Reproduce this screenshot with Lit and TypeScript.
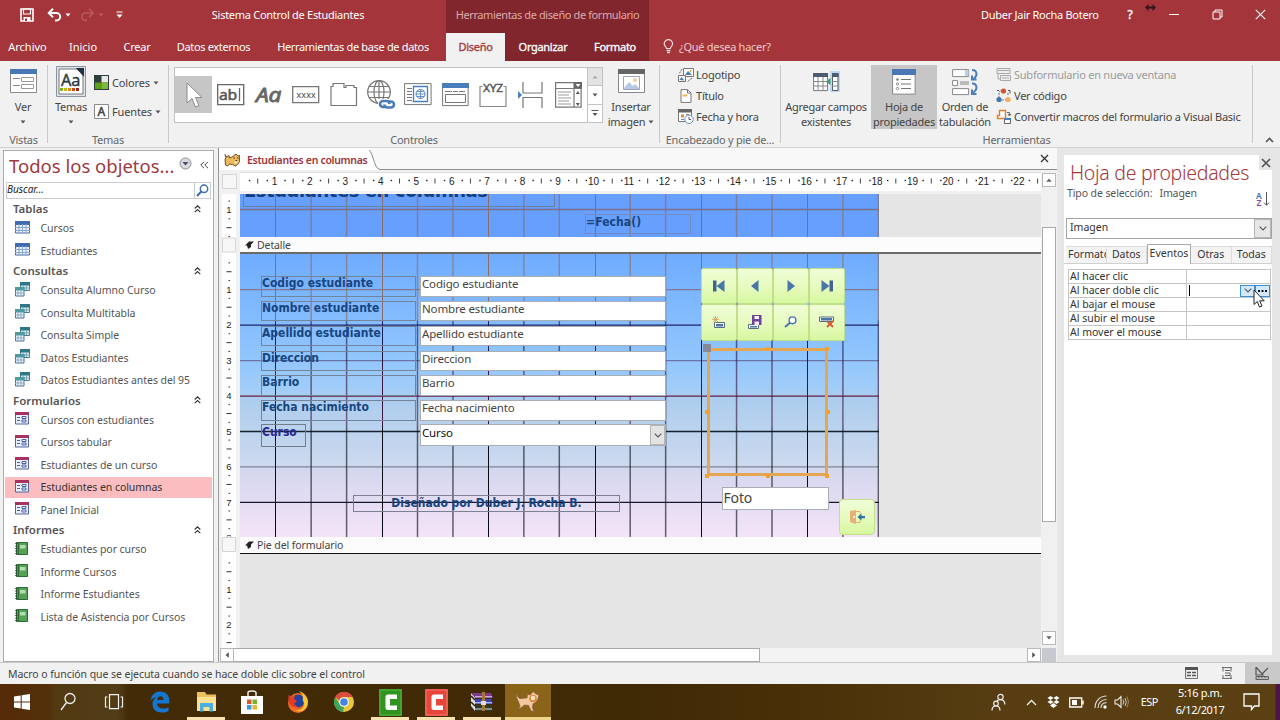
import { LitElement, html, svg, css, TemplateResult } from 'lit';
import { customElement, property, state } from 'lit/decorators.js';
import { classMap } from 'lit/directives/class-map.js';
import { styleMap } from 'lit/directives/style-map.js';

type Kind = 'table' | 'query' | 'form' | 'report';

interface Box {
  x: number;
  y: number;
  w: number;
  h: number;
  text?: string;
}

// pixels per centimetre on the design surface
const CM = 35.45;

const place = (b: Box) =>
  styleMap({ left: `${b.x}px`, top: `${b.y}px`, width: `${b.w}px`, height: `${b.h}px` });

const icon = (w: number, h: number, body: unknown) =>
  html`<svg width=${w} height=${h} viewBox="0 0 ${w} ${h}" fill="none">${body}</svg>`;

const caret = (color = '#555') => icon(6, 4, svg`<path d="M0.5 0.5h5L3 3.5z" fill=${color} />`);

const ICONS: Record<string, TemplateResult> = {
  save: icon(14, 14, svg`<path d="M1 1h12v12H1z" stroke="#fff" stroke-width="1.6"/><path d="M3.5 1h7v5h-7z" stroke="#fff" stroke-width="1.2"/><path d="M3.5 9h7v4h-7z" fill="#fff"/><path d="M5 10.5h2V13H5z" fill="#a4353a"/>`),
  undo: icon(15, 14, svg`<path d="M2 5h7.5a3.7 3.7 0 0 1 0 7.4H8" stroke="#fff" stroke-width="2"/><path d="M6 .8 1.8 5 6 9.2" stroke="#fff" stroke-width="2"/>`),
  redo: icon(15, 14, svg`<path d="M13 5H5.500a3.700 3.700 0 0 0 0 7.400H7" stroke="#b95a5e" stroke-width="1.6"/><path d="M9 .8 13.200 5 9 9.200" stroke="#b95a5e" stroke-width="1.6"/>`),
  customize: icon(7, 8, svg`<path d="M.5 1h6" stroke="#fff"/><path d="M.5 3.500h6L3.500 7z" fill="#fff"/>`),
  resize: icon(11, 7, svg`<path d="M0 3.500 3.500 0v2.500h4V0L11 3.500 7.500 7V4.500h-4V7z" fill="#33161a"/>`),
  min: icon(10, 10, svg`<path d="M0 5.500h10" stroke="#fff"/>`),
  restore: icon(11, 11, svg`<path d="M1 3h7v7H1z" stroke="#fff"/><path d="M3 3V1h7v7H8" stroke="#fff"/>`),
  close: icon(11, 11, svg`<path d="M.8.8l9.400 9.400M10.200.8.8 10.200" stroke="#fff" stroke-width="1.100"/>`),
  bulb: icon(11, 15, svg`<path d="M3.500 9.500C3.300 7.800 1.200 7.200 1.200 4.800a4.200 4.200 0 0 1 8.400 0c0 2.400-2.100 3-2.300 4.700z" stroke="#f3dcdc" stroke-width="1.200"/><path d="M3.600 11.500h3.800M4 13.500h3" stroke="#f3dcdc" stroke-width="1.300"/>`),

  view: icon(27, 25, svg`<path d="M.5.5h26v23H.5z" fill="#fff" stroke="#8a8a8a"/><path d="M0 0h27v5H0z" fill="#4a78b5"/><path d="M3 9.500h7M3 16.500h7" stroke="#8a8a8a"/><path d="M11.500 8.500h12v4h-12zM11.500 15.500h12v4h-12z" stroke="#9a9a9a"/>`),
  themes: icon(30, 31, svg`<path d="M.5.5h29v30H.5z" fill="#dfe3ec" stroke="#8b93a5"/><path d="M3 3h18l6 6v19H3z" fill="#fff" stroke="#777"/><path d="M20 2h8v9z" fill="#203040"/><text x="5" y="20" font-size="16" font-family="Noto Sans, sans-serif" fill="#2b3b44" stroke="#2b3b44" stroke-width=".4" textLength="19" lengthAdjust="spacingAndGlyphs">Aa</text><path d="M4 22h3v3H4z" fill="#7ab51d"/><path d="M8 22h3v3H8z" fill="#c9b71d"/><path d="M12 22h3v3h-3z" fill="#e08a1d"/><path d="M16 22h3v3h-3z" fill="#d0491d"/><path d="M20 22h3v3h-3z" fill="#8f2a1d"/>`),
  colors: icon(15, 15, svg`<path d="M0 0h15v15H0z" fill="#2e3d3d"/><path d="M7.500 1H14v6.500H7.500z" fill="#e7e9e4"/><path d="M1 7.500h6.500V14H1z" fill="#5f9e1d"/><path d="M7.500 7.500H14V14H7.500z" fill="#7dbb3b"/>`),
  fonts: icon(15, 15, svg`<path d="M.5.5h14v14H.5z" fill="#fff" stroke="#8a8a8a"/><text x="3.500" y="11.800" font-size="12" font-family="Noto Sans, sans-serif" fill="#444" stroke="#444" stroke-width=".5">A</text>`),
  pointer: icon(18, 28, svg`<path d="M2 2v20l5-4.500 3.500 8.500 3.500-1.500-3.500-8H17z" fill="#fff" stroke="#8a8a8a"/>`),
  textbox: icon(28, 22, svg`<path d="M.7.7h26v20H.7z" fill="#fff" stroke="#666" stroke-width="1.300"/><text x="2" y="15.500" font-size="15" font-family="Noto Sans, sans-serif" fill="#555" stroke="#555" stroke-width=".5" textLength="18" lengthAdjust="spacingAndGlyphs">ab</text><path d="M22.500 4v13" stroke="#666" stroke-width="1.300"/>`),
  label: icon(30, 30, svg`<text x="2" y="22" font-size="20" font-style="italic" font-family="Noto Sans, sans-serif" fill="#666" stroke="#666" stroke-width=".8" textLength="25" lengthAdjust="spacingAndGlyphs">Aa</text>`),
  button: icon(28, 18, svg`<path d="M.7.7h26v16H.7z" fill="#fff" stroke="#777" stroke-width="1.300"/><text x="4.500" y="12" font-size="9" font-family="Noto Sans, sans-serif" fill="#444" textLength="19">xxxx</text>`),
  tabctl: icon(28, 25, svg`<path d="M1 23.500V4.500H3V1.500h11v4h2V3.500h8v2h2.500v18z" fill="#fff" stroke="#777" stroke-width="1.200"/>`),
  link: icon(30, 30, svg`<g stroke="#777" stroke-width="1.200"><circle cx="13" cy="12" r="11.300"/><ellipse cx="13" cy="12" rx="5" ry="11.300"/><path d="M13 .7v22M2 12h22M3.500 6.500h19M3.500 17.500h19"/></g><path d="M12 19h18v11H12z" fill="#fff"/><g stroke="#4a7ebb" stroke-width="2.600"><path d="M20 27h-3a3 3 0 0 1 0-6h3.500a3 3 0 0 1 3 3"/><path d="M22 21.500h3a3 3 0 0 1 0 6h-3.500a3 3 0 0 1-3-3"/></g>`),
  navctl: icon(28, 23, svg`<path d="M.6.6h26.500v21H.6z" fill="#fff" stroke="#777"/><path d="M3 5.500h5M3 8.500h5M3 11.500h5M3 14.500h5M3 17.500h5" stroke="#777"/><path d="M9.500 3.500h14v15h-14z" fill="#fff" stroke="#4a7ebb" stroke-width="1.300"/><circle cx="16.500" cy="11" r="4.500" stroke="#4a7ebb"/><path d="M12 11h9M16.500 6.500v9M13 8.500h7M13 13.500h7" stroke="#4a7ebb" stroke-width=".8"/>`),
  subform: icon(27, 24, svg`<path d="M.6.6h25.500v22H.6z" fill="#fff" stroke="#777"/><path d="M0 0h27v5H0z" fill="#4a7ebb"/><path d="M3 8.500h7M11 8.500h5M17 8.500h6" stroke="#777"/><path d="M3.500 11.500h20v8h-20z" stroke="#777"/>`),
  group: icon(28, 27, svg`<path d="M3.500 5.500H1v20h26v-20h-2.500" stroke="#888" stroke-width="1.200"/><text x="4" y="11" font-size="11.500" font-family="Noto Sans, sans-serif" fill="#555" stroke="#555" stroke-width=".4" textLength="20" lengthAdjust="spacingAndGlyphs">XYZ</text>`),
  pagebreak: icon(26, 26, svg`<path d="M0 9l4 4-4 4z" fill="#4a7ebb"/><path d="M5 0v11h19V0M5 26V15.500h19V26" stroke="#777" stroke-width="1.200"/>`),
  combo: icon(27, 26, svg`<path d="M.6.6h25.500v24.500H.6z" fill="#fff" stroke="#777" stroke-width="1.200"/><path d="M0 6.500h27M19 .5V25" stroke="#777" stroke-width="1.200"/><path d="M19 0h8v6h-8z" fill="#666"/><path d="M20.500 2h5L23 5z" fill="#fff"/><path d="M3 10h13M3 13h11M3 16h13M3 19h11M3 22h13" stroke="#999"/><path d="M20.800 12h4L22.800 9zM20.800 21h4l-2 3z" fill="#555"/>`),
  insertimg: icon(27, 25, svg`<path d="M.5.5h26v23H.5z" fill="#fff" stroke="#888"/><path d="M0 0h27v5H0z" fill="#666"/><path d="M5.500 7.500h16v13h-16z" fill="#fff" stroke="#9aa6b5"/><path d="M6 19l5-6 4 4 2-2 4 4v1H6z" fill="#b8c9e4"/><circle cx="17" cy="11" r="2" fill="#f0cf93"/>`),
  logo: icon(16, 16, svg`<path d="M5.500 1.500h10v8h-10z" fill="#fff" stroke="#777"/><path d="M7 8l3-4 4 4z" fill="#4a7ebb"/><circle cx="12.500" cy="4" r="1" fill="#e8a33d"/><path d="M.5 8.500h7v6h-7z" fill="#fff" stroke="#777"/><path d="M1.500 13l2-3 3 3.500z" fill="#4a7ebb"/><path d="M4 2 1 7M14 11l-5 4" stroke="#666" stroke-dasharray="2 1"/>`),
  heading: icon(12, 14, svg`<path d="M1 .6h6.500L11 4v9.400H1z" fill="#fff" stroke="#777"/><path d="M7.500.6V4H11" stroke="#777"/><path d="M2.500 5.500h5v2h-5z" fill="#f0b455"/>`),
  date: icon(16, 15, svg`<path d="M.5 1.500h13v11H.5z" fill="#fff" stroke="#777"/><path d="M0 0h14v3.500H0z" fill="#666"/><path d="M3 5.500h3v3H3z" fill="#e08a3d"/><path d="M8 5.500h3M8 8h2M3 10.500h3" stroke="#888"/><circle cx="11" cy="10.300" r="4.200" fill="#fff" stroke="#5f8cc4"/><path d="M11 8v2.500h2" stroke="#555"/>`),
  addfields: icon(27, 22, svg`<path d="M.6 2.600h14v17H.6z" fill="#fff" stroke="#777"/><path d="M0 2h15v4H0z" fill="#4d5b73"/><path d="M0 10.500h15M0 15h15M5 6v14M10 6v14" stroke="#888"/><path d="M17 0h10v21H17z" fill="#c3d6ec"/><path d="M19.500 2.500h5.500v17h-5.500z" fill="#fff" stroke="#4d5b73"/><path d="M19 2h6.500v4H19z" fill="#4d5b73"/><path d="M19 10.500h6M19 15h6" stroke="#888"/><path d="M17.500 7v7L13 10.500z" fill="#3f9c74"/>`),
  sheet: icon(24, 26, svg`<path d="M.6.6h22.500v24.500H.6z" fill="#fff" stroke="#888"/><path d="M0 0h24v6H0z" fill="#4a78b5"/><path d="M9 10.500h10M9 15h10M9 19.500h10" stroke="#777"/><circle cx="5.500" cy="10.500" r="1.200" fill="#777"/><circle cx="5.500" cy="15" r="1.200" stroke="#777" stroke-width=".8"/><circle cx="5.500" cy="19.500" r="1.200" stroke="#777" stroke-width=".8"/>`),
  taborder: icon(27, 28, svg`<g stroke="#888" fill="#fff"><path d="M.6 1.600h16v7H.6zM.6 12.600h5v5h-5zM.6 20.600h16v6H.6z"/></g><path d="M13 2h3.500v6H13z" fill="#b9d0ec"/><path d="M8 13h9v4H8z" fill="#bbb"/><g stroke="#4a7ebb" stroke-width="2"><path d="M20 2c5.500 0 6 6 1 9M24.500 11.500H20V7.500M20 15.500c5.500 0 6 6 1 9M24.500 26H20v-4.500"/></g>`),
  newsub: icon(15, 15, svg`<g stroke="#aaa"><path d="M1 1.500h13v5H1zM4.500 8.500h10v5h-10z" fill="#eee"/><path d="M2 7v5h3M2 3.500h11M6 11h7" /></g>`),
  code: icon(15, 15, svg`<path d="M3 4l3-2M3 5v5M12 5v3M6 12h4" stroke="#777" stroke-dasharray="2 1"/><circle cx="7.500" cy="3" r="2.600" fill="#d9532c"/><circle cx="3" cy="11.500" r="2.600" fill="#3f73b5"/><circle cx="12" cy="11.500" r="2.600" fill="#f0ae62"/><path d="M1 2.500h2M12 2.500h2v3" stroke="#555"/>`),
  convert: icon(16, 16, svg`<path d="M3.500 1.500h6v8H1.500v-3h2z" fill="#fff" stroke="#e07b2d" stroke-width="1.400"/><path d="M11 3.500h2.500V6M12 5l1.500 2L15 5" stroke="#666"/><path d="M8.500 9.500h6v5h-6z" fill="#fff" stroke="#666"/><path d="M8 9h7v2H8z" fill="#4a7ebb"/>`),

  table: icon(15, 13, svg`<path d="M.5.5h14v11.500H.5z" fill="#eaf2fd" stroke="#4d6a99"/><path d="M0 0h15v4H0z" fill="#3f6cb0"/><path d="M0 6.500h15M0 9.500h15M4 3v9.500M7.500 3v9.500M11 3v9.500" stroke="#8aa5cf"/>`),
  query: icon(15, 15, svg`<path d="M5.500.5h9v8h-9z" fill="#d7e9f3" stroke="#4b7b8e"/><path d="M5 0h10v3.500H5z" fill="#2c7884"/><path d="M8 3v5M11.500 3v5M5.500 6h9" stroke="#7fa6b8"/><path d="M.5 5.500h8.500v8.500H.5z" fill="#eef6fb" stroke="#4b6f92"/><path d="M0 5h9.500v3.500H0z" fill="#4f9a9c"/><path d="M0 11h9M3 8v6M6 8v6" stroke="#8aa9c8"/>`),
  form: icon(14, 13, svg`<path d="M.5.5h13v11.500H.5z" fill="#e9effb" stroke="#53659b"/><path d="M0 0h14v3H0z" fill="#a8325f"/><path d="M2 5.500h3M2 8.500h3" stroke="#4a5ea5"/><path d="M7 4.500h4v2H7zM7 8h4v2H7z" fill="#fff" stroke="#4a5ea5"/>`),
  report: icon(13, 13, svg`<path d="M1.500.5h11v12h-11z" fill="#55a155" stroke="#2d6b35"/><path d="M5 3h5.500v3.500H5z" fill="#b5ddb0"/><path d="M3.500 1v11" stroke="#2d6b35"/><path d="M.3 1.500h2M.3 4h2M.3 6.500h2M.3 9h2M.3 11.500h2" stroke="#333"/>`),
  search: icon(13, 13, svg`<circle cx="8" cy="4.800" r="3.700" stroke="#3f6cb0" stroke-width="1.500"/><path d="M5.300 7.500 1 12" stroke="#3f6cb0" stroke-width="2"/>`),
  dropCircle: icon(13, 13, svg`<circle cx="6.500" cy="6.500" r="5.500" fill="#d9d9de" stroke="#8d8d96"/><path d="M3.500 5h6l-3 3.500z" fill="#444c70"/>`),
  chevrons: icon(9, 8, svg`<path d="M4 .8.8 4 4 7.200M8 .8 4.800 4 8 7.200" stroke="#444"/>`),
  collapse: icon(7, 8, svg`<path d="M.7 3.500 3.500.8l2.800 2.700M.7 7.200l2.800-2.700 2.800 2.700" stroke="#333" stroke-width="1.100"/>`),
  cat: icon(16, 14, svg`<path d="M1 1.500 2 5l-1 1 .5 6 2 1 2-2 3 .5 3 1.500 2-1.500 2-3V5l.5-2.500-2 .5-2-2-2 1.500L8 4 5.500 5 5 2.500 2.500 4z" fill="#ecb95f" stroke="#6b3d1a" stroke-width=".9"/><path d="M9.500 5h1.500M13 5h1.500M11.500 7.500h1.500" stroke="#5b2d10"/><path d="M10 8.500h4l-1 2h-2z" fill="#fbe9cf"/>`),
  bigcat: icon(24, 24, svg`<path d="M1 3.500Q1.500 8 4 8.500q3-.5 7-.5l.5-4L14 5l3-3.500L20 4l3 1-1 4-2 3-3 2-.5 4 1.500 3.500-3-.5-2.500-5.500-4-.5L6 17l-3.500 2.500L4 16l-1.500-4Q-.5 8 1 3.500z" fill="#f0c9a0" stroke="#8c5a3c" stroke-width=".8"/><circle cx="17" cy="8.500" r="3.800" fill="#e08b3a"/><circle cx="17" cy="8" r="2.200" fill="#fbe6c8"/>`),
  section: icon(9, 9, svg`<path d="M9 .5H4L0 4.500h2L3 8l3-2V3.500z" fill="#222"/>`),
  down: icon(8, 5, svg`<path d="M.7.7 4 4 7.300.7" stroke="#555" stroke-width="1.100"/>`),
  sort: icon(14, 16, svg`<text x="0" y="7.500" font-size="8.500" font-weight="600" font-family="Noto Sans, sans-serif" fill="#3f6cb0">A</text><text x="0.500" y="15" font-size="8.500" font-weight="600" font-family="Noto Sans, sans-serif" fill="#884a9b">Z</text><path d="M10.500 1v13M8 11.500l2.500 2.800 2.500-2.800" stroke="#555"/>`),
  cursor: icon(13, 20, svg`<path d="M1 1v14.500l3.300-3 2.200 5.500 2.500-1-2.300-5.200h4.500z" fill="#fff" stroke="#222"/>`),

  first: icon(14, 14, svg`<path d="M1 1.500h3.500v11H1z" fill="#41648f"/><path d="M12.500 1v12L4.500 7z" fill="#4876a8"/>`),
  prev: icon(10, 14, svg`<path d="M8.500 1v12L1 7z" fill="#4876a8"/>`),
  next: icon(10, 14, svg`<path d="M1.500 1v12L9 7z" fill="#4876a8"/>`),
  last: icon(14, 14, svg`<path d="M9.500 1.500H13v11H9.500z" fill="#41648f"/><path d="M1.500 1v12l8-6z" fill="#4876a8"/>`),
  add: icon(14, 13, svg`<path d="M2.500 6.500h10v5h-10z" fill="#fff" stroke="#5a6a85"/><path d="M4 8h7v2.500H4z" fill="#4876a8"/><path d="M3.500 0v7M0 3.500h7M1 1l5 5M6 1 1 6" stroke="#d9a468" stroke-width=".9"/>`),
  disk: icon(15, 15, svg`<path d="M1.500 9.500h10v4h-10z" fill="#fff" stroke="#5a6a85"/><path d="M3 11h7v1.500H3z" fill="#4876a8"/><path d="M5 0h9.500v10H5z" fill="#72429a"/><path d="M7.500 1h4.500v3H7.500z" fill="#fff"/><path d="M7.500 6.500h4.500V10H7.500z" fill="#eee"/>`),
  find: icon(13, 12, svg`<circle cx="8.500" cy="4.300" r="3.400" fill="#fff" stroke="#4876a8" stroke-width="1.400"/><path d="M6 6.800 1 11" stroke="#4876a8" stroke-width="2"/>`),
  del: icon(15, 12, svg`<path d="M.5 1h14v4.500H.5z" fill="#fff" stroke="#5a6a85"/><path d="M2 2h11v2.500H2z" fill="#4876a8"/><path d="M8 5l6 6M14 5l-6 6" stroke="#d3562f" stroke-width="1.800"/>`),
  door: icon(17, 16, svg`<path d="M1 2l6-1v14l-6-2z" fill="#e5b176"/><circle cx="5.300" cy="8" r=".9" fill="#fff"/><path d="M7 2.500h4v2M7 13.500h4v-2" stroke="#e5b176"/><path d="M8.500 8l4-3.700V7H16v2.200h-3.500v2.600z" fill="#33739c"/>`),

  start: icon(16, 16, svg`<path d="M0 2.500 6.700 1.500v6H0zM7.700 1.300 16 0v7.500H7.700zM0 8.500h6.700v6L0 13.500zM7.700 8.500H16V16l-8.300-1.300z" fill="#fff"/>`),
  find2: icon(16, 20, svg`<circle cx="10" cy="6.500" r="5" stroke="#eee" stroke-width="1.300"/><path d="M6.500 10.500 1 18" stroke="#eee" stroke-width="1.300"/>`),
  taskview: icon(20, 16, svg`<path d="M5.500.7h9v14h-9zM3.500 3h-2v10h2M16.500 3h2v10h-2" stroke="#eee" stroke-width="1.200"/>`),
  edge: icon(20, 22, svg`<path d="M.7 9.500C1.500 3.500 5.500.5 10 .5c6 0 9.300 4 9.300 9v3H7c.3 3.500 3 5 6 5 2 0 4-.5 5.500-1.500v4c-2 1-4 1.500-6.500 1.500-6 0-9.500-3.500-9.500-8.500 0-3 1.500-5.500 4-7-2.500.5-4.500 1.800-5.800 3.500zM7 9h6.500c0-2.500-1.200-3.800-3-3.800S7.500 6.500 7 9z" fill="#1576cf"/>`),
  explorer: icon(21, 20, svg`<path d="M1 0h8l1.500 2.500H20V19H1z" fill="#e9c260"/><path d="M1 5h19v14H1z" fill="#fbe191"/><path d="M4 11h13v8.500h-3.500V15h-6v4.500H4z" fill="#49aee0"/>`),
  store: icon(22, 24, svg`<path d="M7 7V2.500C7 1.500 8 1 11 1s4 .5 4 1.500V7" stroke="#eee" stroke-width="1.500"/><path d="M0 6h22v18H0z" fill="#fff"/><path d="M6 9.500h4.500V14H6z" fill="#e0552b"/><path d="M11.500 9.500H16V14h-4.500z" fill="#78b52e"/><path d="M6 15h4.500v4.500H6z" fill="#2f9fe0"/><path d="M11.500 15H16v4.500h-4.500z" fill="#efb52e"/>`),
  firefox: icon(22, 24, svg`<circle cx="11" cy="13" r="10" fill="#ef6a24"/><circle cx="11" cy="11" r="6.500" fill="#24449b"/><path d="M12 1c8 3 10 9 8.500 14-2 6-8 8-13 5 5 1 9-1 9.500-5.500.3-3-2-4-1-7C16 4.500 14 3 12 1z" fill="#fbc62e"/><path d="M1.500 5 5 7l3-1-1 3 3 2-3 3 4 3c-5 1-9-2-9.500-6z" fill="#e43c24"/>`),
  chrome: icon(22, 22, svg`<circle cx="11" cy="11" r="10" fill="#eac63c"/><path d="M11 1a10 10 0 0 1 8.700 5H11a5 5 0 0 0-4.700 3.500L2.300 6A10 10 0 0 1 11 1z" fill="#dc4b3c"/><path d="M2.300 6 6.700 13.500A5 5 0 0 0 11 16l-1 5A10 10 0 0 1 2.300 6z" fill="#3da45a"/><circle cx="11" cy="11" r="4.800" fill="#fff"/><circle cx="11" cy="11" r="3.800" fill="#4484e4"/>`),
  camtasia: icon(23, 27, svg`<path d="M0 0h23v27H0z" fill="#2f9420"/><path d="M1 1h21v25H1z" stroke="#57b53f"/><path d="M18 5.500H9Q6.500 5.500 6.500 8v10.500Q6.500 21 9 21h9v-4.500h-7V10h7z" fill="#fff"/>`),
  recorder: icon(23, 27, svg`<path d="M0 0h23v27H0z" fill="#e8453b"/><path d="M1 1h21v25H1z" stroke="#f2766b"/><path d="M18 5.500H9Q6.500 5.500 6.500 8v10.500Q6.500 21 9 21h9v-4.500h-7V10h7z" fill="#fff"/>`),
  winrar: icon(22, 20, svg`<path d="M1 1h19l2 5H3z" fill="#7c3a8e"/><path d="M1 7h19l2 5H3z" fill="#3a45b4"/><path d="M1 13h19l2 6H3z" fill="#2a3c22"/><path d="M0 1l4 5v13l-4-5z" fill="#ddd"/><path d="M0 4l4 4M0 10l4 4" stroke="#222" stroke-width="1.500"/><path d="M4 4.800h17M4 10.800h17M4 17h17" stroke="#e8ddf0"/><path d="M11 0h3v19h-3z" fill="#a5762f"/><path d="M10 9h5v4h-5z" fill="#ddd"/>`),

  people: icon(15, 18, svg`<g stroke="#eee" stroke-width="1.200"><circle cx="9.500" cy="4" r="2.700"/><path d="M13.800 11.500c0-6-7-6-8.500-2.500"/><circle cx="5" cy="10.500" r="2.300"/><path d="M1 17.500c0-6 8-6 8 0"/></g>`),
  up: icon(11, 7, svg`<path d="M1 6l4.500-4.500L10 6" stroke="#eee" stroke-width="1.300"/>`),
  dropbox: icon(13, 13, svg`<path d="M3.500 0 6.500 2 3.500 4 .5 2zM9.500 0l3 2-3 2-3-2zM3.500 4l3 2-3 2-3-2zM9.500 4l3 2-3 2-3-2zM6.500 7l3.500 2.500-3.500 2.500L3 9.500z" fill="#fff"/>`),
  battery: icon(15, 11, svg`<path d="M.7 1h12v9H.7z" stroke="#fff" stroke-width="1.300"/><path d="M3 3h5v5H3z" fill="#fff"/><path d="M14 3.500v4" stroke="#fff" stroke-width="1.500"/>`),
  wifi: icon(13, 14, svg`<g stroke="#ddd" stroke-width="1.200"><path d="M1 13C1 6 6 1 12.500 1M4 13c0-5 3.500-8.500 8.500-8.500M7 13c0-3 2-5.300 5.500-5.300"/></g><circle cx="11" cy="12" r="1.700" fill="#fff"/>`),
  volume: icon(15, 14, svg`<path d="M1 5h2.500L7 1.500v11L3.500 9H1z" stroke="#eee" stroke-width="1.100"/><path d="M9 4.500q1.500 2.500 0 5M11 3q2.500 4 0 8" stroke="#ccc"/><path d="M13 1.500q3 5.500 0 11" stroke="#998866"/>`),
  notif: icon(17, 18, svg`<path d="M1 1h15v12h-4.500L8.500 16.500V13H1z" stroke="#fff" stroke-width="1.300"/>`),
  formview: icon(13, 12, svg`<path d="M.6.6h12v11H.6z" stroke="#666"/><path d="M0 0h13v3H0z" fill="#555"/><path d="M2 5.500h4M2 8.500h4M7 5.500h4M7 8.500h4" stroke="#555" stroke-width="1.500"/>`),
  layout: icon(12, 12, svg`<path d="M1 .6h10M1 11.400h10M2 .6v4M10 .6v4M2 8v3M10 8v3M4 3.500h5M4 6h5v2.500H4" stroke="#666"/>`),
  designview: icon(14, 13, svg`<path d="M1 0v8h7zM13 1 6.500 7.500" stroke="#555" stroke-width="1.200"/><path d="M1 9.600h12.400v2.800H1z" stroke="#555"/><path d="M4 10v1M7 10v1M10 10v1" stroke="#555"/>`)
};

@customElement('nav-pane')
export class NavPane extends LitElement {
  @state() selected = 'Estudiantes en columnas';

  groups: { title: string; kind: Kind; items: string[] }[] = [
    { title: 'Tablas', kind: 'table', items: ['Cursos', 'Estudiantes'] },
    {
      title: 'Consultas',
      kind: 'query',
      items: ['Consulta Alumno Curso', 'Consulta Multitabla', 'Consulta Simple', 'Datos Estudiantes', 'Datos Estudiantes antes del 95']
    },
    {
      title: 'Formularios',
      kind: 'form',
      items: ['Cursos con estudiantes', 'Cursos tabular', 'Estudiantes de un curso', 'Estudiantes en columnas', 'Panel Inicial']
    },
    {
      title: 'Informes',
      kind: 'report',
      items: ['Estudiantes por curso', 'Informe Cursos', 'Informe Estudiantes', 'Lista de Asistencia por Cursos']
    }
  ];

  static styles = css`
    :host {
      display: flex;
      flex-direction: column;
      flex: none;
      box-sizing: border-box;
      width: 211px;
      margin: 2px 0 0 3px;
      height: 512px;
      border: 1px solid #a9acb2;
      background: #fff;
      padding: 0 1px;
      color: #555;
    }
    svg { display: block; flex: none; }
    .title {
      display: flex;
      align-items: center;
      height: 31px;
      padding: 0 3px 0 4px;
      font-size: 18.5px;
      color: #9c3a3f;
      white-space: nowrap;
    }
    .title span { flex: 1; line-height: 28px; margin-top: -2px; }
    .title svg { margin-top: -6px; }
    .title svg:last-child { margin: -4px 0 0 8px; }
    .find {
      display: flex;
      box-sizing: border-box;
      height: 17px;
      margin: 0 1px 1px;
      border: 1px solid #c9ccd1;
      font-size: 10px;
      font-style: italic;
      color: #222;
      line-height: 13px;
    }
    .find span { flex: 1; }
    .find div { border-left: 1px solid #c9ccd1; padding: 1px; }
    .head {
      display: flex;
      align-items: center;
      justify-content: space-between;
      height: 17px;
      padding: 0 11px 0 8px;
      font-size: 11.5px;
      font-weight: 600;
    }
    .item {
      display: flex;
      align-items: center;
      height: 20.5px;
      margin: 1px 0;
      padding-left: 10px;
      font-size: 10.5px;
      letter-spacing: -0.06px;
    }
    .item .pic { width: 25.5px; margin-top: -2px; }
    .item.selected { background: #fbbdc0; color: #333; }
  `;

  render() {
    return html`
      <div class="title"><span>Todos los objetos...</span>${ICONS.dropCircle}${ICONS.chevrons}</div>
      <div class="find"><span>Buscar...</span><div>${ICONS.search}</div></div>
      ${this.groups.map(g => html`
        <div class="head">${g.title}${ICONS.collapse}</div>
        ${g.items.map(name => html`
          <div class=${classMap({ item: true, selected: name === this.selected })} @click=${() => (this.selected = name)}>
            <span class="pic">${ICONS[g.kind]}</span>${name}
          </div>`)}
      `)}
    `;
  }
}

@customElement('ribbon-bar')
export class RibbonBar extends LitElement {
  static styles = css`
    :host {
      display: flex;
      box-sizing: border-box;
      height: 87px;
      background: #f1f1f1;
      border-bottom: 1px solid #d2d2d2;
      color: #444;
      font-size: 11px;
      letter-spacing: -0.24px;
      white-space: nowrap;
    }
    svg { display: block; flex: none; }
    .group {
      box-sizing: border-box;
      display: flex;
      flex-direction: column;
      margin: 4px 0 4px;
      border-right: 1px solid #c9c9c9;
    }
    .body { display: flex; height: 62px; }
    .name { height: 16px; line-height: 16px; padding-top: 5px; text-align: center; color: #666; }
    .g1 { width: 48px; }
    .g2 { width: 121px; }
    .g3 { width: 491px; }
    .g4 { width: 121px; }
    .g5 { width: 472px; }
    .big {
      display: flex;
      flex-direction: column;
      align-items: center;
      box-sizing: border-box;
      height: 64px;
      line-height: 15px;
      text-align: center;
    }
    .big .pic { display: flex; align-items: center; height: 33px; }
    .big .cap { margin-top: 1px; }
    .big .cap svg { display: inline-block; vertical-align: 2px; margin-left: 3px; }
    .big > svg { margin-top: 6px; }
    .ver { width: 46px; }
    .temas { width: 46px; }
    .insert { width: 56px; }
    .fields { width: 90px; }
    .sheet { width: 66px; background: #c6c6c6; }
    .order { width: 56px; }
    .pair { display: flex; flex-direction: column; padding: 3px 0 0 0; }
    .pair div { display: flex; align-items: center; gap: 3px; height: 29px; letter-spacing: -0.15px; }
    .gallery {
      display: flex;
      flex: none;
      box-sizing: border-box;
      width: 429px;
      height: 56px;
      margin: 2px 0 0 5px;
      border: 1px solid #c3c3c3;
      background: #fff;
    }
    .cell { display: flex; align-items: center; justify-content: center; width: 37.5px; height: 37px; margin-top: 8px; }
    .cell.on { background: #c6c6c6; }
    .scroll { display: flex; flex-direction: column; width: 14px; margin-left: auto; border-left: 1px solid #c3c3c3; }
    .scroll div { flex: 1; display: flex; align-items: center; justify-content: center; border-bottom: 1px solid #c3c3c3; }
    .scroll div:first-child { background: #e3e3e3; }
    .scroll div:last-child { border-bottom: 0; }
    .list { display: flex; flex-direction: column; padding-left: 17px; margin-top: -1px; }
    .list.tools { padding-left: 2px; }
    .list div { display: flex; align-items: center; height: 21.7px; gap: 2px; }
    .list .pic { display: flex; justify-content: center; width: 17px; height: auto; }
    .off { color: #9b9b9b; }
    .fold { display: flex; align-items: flex-end; padding: 0 0 4px 12px; }
  `;

  controls = ['pointer', 'textbox', 'label', 'button', 'tabctl', 'link', 'navctl', 'subform', 'group', 'pagebreak', 'combo'];

  render() {
    return html`
      <div class="group g1">
        <div class="body">
          <div class="big ver"><span class="pic">${ICONS.view}</span><span class="cap">Ver</span>${caret()}</div>
        </div>
        <div class="name">Vistas</div>
      </div>
      <div class="group g2">
        <div class="body">
          <div class="big temas"><span class="pic">${ICONS.themes}</span><span class="cap">Temas</span>${caret()}</div>
          <div class="pair">
            <div>${ICONS.colors} Colores ${caret()}</div>
            <div>${ICONS.fonts} Fuentes ${caret()}</div>
          </div>
        </div>
        <div class="name">Temas</div>
      </div>
      <div class="group g3">
        <div class="body">
          <div class="gallery">
            ${this.controls.map((c, i) => html`<div class=${classMap({ cell: true, on: i === 0 })}>${ICONS[c]}</div>`)}
            <div class="scroll">
              <div>${icon(6, 4, svg`<path d="M.5 3.500h5L3 .5z" fill="#aaa"/>`)}</div>
              <div>${caret()}</div>
              <div>${icon(8, 7, svg`<path d="M.5.5h7" stroke="#555"/><path d="M1.500 3h5L4 6z" fill="#555"/>`)}</div>
            </div>
          </div>
          <div class="big insert">
            <span class="pic">${ICONS.insertimg}</span>
            <span class="cap">Insertar<br>imagen${caret()}</span>
          </div>
        </div>
        <div class="name">Controles</div>
      </div>
      <div class="group g4">
        <div class="body">
          <div class="list">
            <div><span class="pic">${ICONS.logo}</span>Logotipo</div>
            <div><span class="pic">${ICONS.heading}</span>Título</div>
            <div><span class="pic">${ICONS.date}</span>Fecha y hora</div>
          </div>
        </div>
        <div class="name">Encabezado y pie de...</div>
      </div>
      <div class="group g5">
        <div class="body">
          <div class="big fields"><span class="pic">${ICONS.addfields}</span><span class="cap">Agregar campos<br>existentes</span></div>
          <div class="big sheet"><span class="pic">${ICONS.sheet}</span><span class="cap">Hoja de<br>propiedades</span></div>
          <div class="big order"><span class="pic">${ICONS.taborder}</span><span class="cap">Orden de<br>tabulación</span></div>
          <div class="list tools">
            <div class="off"><span class="pic">${ICONS.newsub}</span>Subformulario en nueva ventana</div>
            <div><span class="pic">${ICONS.code}</span>Ver código</div>
            <div><span class="pic">${ICONS.convert}</span>Convertir macros del formulario a Visual Basic</div>
          </div>
        </div>
        <div class="name">Herramientas</div>
      </div>
      <div class="fold">${icon(9, 6, svg`<path d="M1 5l3.500-3.500L8 5" stroke="#555" stroke-width="1.600"/>`)}</div>
    `;
  }
}

@customElement('form-designer')
export class FormDesigner extends LitElement {
  @property({ type: Array }) labels: Box[] = [
    { x: 21, y: 22, w: 155, h: 20.5, text: 'Codigo estudiante' },
    { x: 21, y: 46.5, w: 155, h: 20.5, text: 'Nombre estudiante' },
    { x: 21, y: 71.5, w: 155, h: 20.5, text: 'Apellido estudiante' },
    { x: 21, y: 96.5, w: 155, h: 20.5, text: 'Direccion' },
    { x: 21, y: 121, w: 155, h: 20.5, text: 'Barrio' },
    { x: 21, y: 146, w: 155, h: 20.5, text: 'Fecha nacimiento' }
  ];

  fields: Box[] = this.labels.map(l => ({ ...l, x: 180, w: 246 }));

  commands = ['first', 'prev', 'next', 'last', 'add', 'disk', 'find', 'del'];

  handles = [[-2, 126], [59, 126], [118, 126], [59, -1], [118, -1], [-2, 62], [119, 62]];

  static styles = css`
    :host {
      display: flex;
      flex-direction: column;
      flex: none;
      width: 839px;
      background: #f1f1f1;
      color: #444;
      font-size: 11px;
    }
    svg { display: block; flex: none; }
    .tabs { display: flex; height: 22px; background: #f8f8f8; }
    .tab {
      display: flex;
      align-items: center;
      gap: 7px;
      box-sizing: border-box;
      width: 151px;
      padding: 2px 0 0 5px;
      border-left: 1px solid #8d8d8d;
      background: #fff;
      font-size: 10.5px;
      font-weight: 600;
      letter-spacing: -0.32px;
      color: #a0343a;
      white-space: nowrap;
    }
    .tabs .rest { flex: 1; display: flex; justify-content: flex-end; align-items: center; border-bottom: 1px solid #8d8d8d; padding-right: 8px; }
    .work {
      display: grid;
      grid-template-columns: 19px 801px 14px;
      grid-template-rows: 22px 454px 15px;
      column-gap: 1px;
      padding: 2px 0 0 1px;
      border-left: 1px solid #9a9a9a;
      flex: 1;
    }
    .corner { width: 13px; height: 13px; margin: 2px 0 0 2px; border: 1px solid #d5d5d5; background: #f7f7f7; }
    .hruler { background: #fff; margin-bottom: 3px; border-top: 1px solid #ddd; overflow: hidden; }
    .vruler { background: #fff; margin: 0 3px 0 2px; overflow: hidden; }
    .surface { background: #e5e5e5; overflow: hidden; }
    .band { position: relative; overflow: hidden; }
    .band > svg { position: absolute; left: 0; top: 0; }
    .head { height: 43px; }
    .detail { height: 282.5px; }
    .bar {
      display: flex;
      align-items: center;
      gap: 3px;
      box-sizing: border-box;
      height: 17px;
      padding: 1px 0 0 5px;
      background: #fcfcfc;
      border-bottom: 2px solid #6a6a6a;
      font-size: 10.5px;
      letter-spacing: -0.1px;
    }
    .bar.foot { border-bottom: 1px solid #111; }
    .lbl, .fld, .nav, .pic, .exit { position: absolute; box-sizing: border-box; white-space: nowrap; }
    .lbl {
      border: 1px solid #71849c;
      color: #17457f;
      font: bold 12px/13px 'DejaVu Sans Condensed', 'DejaVu Sans', sans-serif;
    }
    .lbl.big { font-size: 20px; line-height: 15px; color: #123c80; letter-spacing: -0.45px; border-color: #6d7f9e; }
    .lbl.calc { border-color: #6d8cc0; line-height: 15px; letter-spacing: 0.1px; }
    .lbl.mid { text-align: center; border-color: #7d7f92; line-height: 14px; }
    .lbl.link { color: #2a2a96; border-color: #77798c; line-height: 14px; }
    .fld { background: #fff; border: 1px solid #a9aeb5; padding-left: 1px; font-size: 11.5px; line-height: 14px; letter-spacing: -0.15px; }
    .fld.combo { display: flex; justify-content: space-between; line-height: 15px; color: #111; }
    .fld.combo div { display: flex; align-items: center; justify-content: center; width: 15px; background: #e3e3e3; border: 1px solid #b5b5b5; box-sizing: border-box; }
    .fld.photo { font-size: 14px; line-height: 19px; }
    .nav { display: grid; grid-template-columns: repeat(4, 1fr); grid-template-rows: 1fr 1fr; }
    .key {
      display: flex;
      align-items: center;
      justify-content: center;
      box-sizing: border-box;
      border: 1px solid #c2df8a;
      border-radius: 2px;
      background: linear-gradient(#effdd6, #e7fbc0 50%, #d7f7a0);
    }
    .exit { border-radius: 4px; border-width: 1.500px; }
    .pic { border: 3px solid #e5a654; }
    .grip { position: absolute; width: 4px; height: 4px; background: #f5a12d; }
    .grip.move { width: 8px; height: 8px; background: #85899a; }
    .vscroll { display: flex; flex-direction: column; grid-row: 1 / 3; grid-column: 3; margin: 1px 0 0; background: #f0f0f0; }
    .arrow { display: flex; align-items: center; justify-content: center; box-sizing: border-box; width: 14px; height: 14px; background: #fff; border: 1px solid #b9b9b9; }
    .vthumb { box-sizing: border-box; height: 295px; margin: 40px 0 109px; background: #fff; border: 1px solid #a9a9a9; }
    .hscroll { display: flex; grid-column: 1 / 3; background: #f3f3f3; height: 14px; }
    .hthumb { box-sizing: border-box; width: 526px; height: 14px; margin-right: auto; background: #fff; border: 1px solid #a9a9a9; border-left: 0; }
    .grey { background: #c6c9cf; }
  `;

  rulerText(n: number, vertical: boolean) {
    const p = n * CM;
    const mid = p - CM / 2;
    const dots = [p - CM * 0.75, p - CM * 0.25];
    return vertical
      ? svg`
        <text x="7" y=${p + 3.5} text-anchor="middle">${n}</text>
        <path d="M4.500 ${mid}h5" stroke="#333"/>
        ${dots.map(d => svg`<path d="M6.500 ${d}h1.600" stroke="#333"/>`)}`
      : svg`
        <text x=${p - 1} y="11.500" text-anchor="middle">${n}</text>
        <path d="M${mid} 5.500v5" stroke="#444"/>
        ${dots.map(d => svg`<path d="M${d} 7.500h1.400" stroke="#222" stroke-width="1.400"/>`)}`;
  }

  hruler() {
    const nums = Array.from({ length: 22 }, (_, i) => i + 1);
    return html`<svg width="801" height="18" font-size="10" font-family="Liberation Sans, sans-serif" fill="#222">
      ${nums.map(n => this.rulerText(n, false))}
      <path d="M788.700 7.500h1.400" stroke="#222" stroke-width="1.400"/>
      <path d="M797.600 5.500v5" stroke="#444"/>
    </svg>`;
  }

  // three stacked scales, one for every section of the form
  vruler() {
    const part = (top: number, h: number, from: number, to: number, shift: number) => svg`
      <svg x="0" y=${top} width="14" height=${h}>
        <g transform="translate(0 ${shift})">
          ${Array.from({ length: to - from + 1 }, (_, i) => this.rulerText(from + i, true))}
        </g>
      </svg>
      <path d="M0.500 ${top + h + 1}h13v14h-13z" fill="#f7f7f7" stroke="#d5d5d5"/>`;
    return html`<svg width="14" height="454" font-size="9.500" font-family="Liberation Sans, sans-serif" fill="#222">
      ${part(0, 43, 1, 2, -19.5)} ${part(60, 282.5, 1, 8, 0)} ${part(360, 110, 1, 2, 0)}
      <path d="M6.500 439.800h1.600" stroke="#333"/>
      <path d="M4.500 448.600h5" stroke="#333"/>
    </svg>`;
  }

  grid(w: number, h: number, offset: number, stroke: string, rows: string[]) {
    return svg`
      ${rows.map((c, i) => svg`<path d="M0 ${offset + i * CM}h${w}" stroke=${c} stroke-width="1.300"/>`)}
      ${Array.from({ length: 18 }, (_, i) => {
        const x = (i + 1) * CM;
        const sharp = i % 3 === 0;
        return svg`<rect x=${sharp ? Math.round(x) : x - 0.5} y="0" width=${sharp ? 1 : 1.5} height=${h} fill=${stroke} opacity=${sharp ? 1 : 0.62}/>`;
      })}`;
  }

  header() {
    return html`<svg width="639" height="43">
      <rect width="639" height="43" fill="#669ffe"/>
      ${this.grid(639, 43, 15.5, '#8b6c68', ['#7c6f8c'])}
    </svg>`;
  }

  detail() {
    const rows = ['#80789a', '#1f2566', '#6d74a5', '#641f4c', '#15222f', '#7d8799', '#181a2c'];
    return html`<svg width="639" height="283">
      <defs>
        <linearGradient id="sky" x1="0" y1="0" x2="0" y2="1">
          <stop offset="0" stop-color="#6facff"/>
          <stop offset=".36" stop-color="#90c5fd"/>
          <stop offset=".48" stop-color="#a2cdf8"/>
          <stop offset=".5" stop-color="#aaccee"/>
          <stop offset=".74" stop-color="#ccd9ee"/>
          <stop offset=".77" stop-color="#d5d7ef"/>
          <stop offset="1" stop-color="#f5e4f8"/>
        </linearGradient>
        <linearGradient id="wire" gradientUnits="userSpaceOnUse" x1="0" y1="0" x2="0" y2="283">
          <stop offset="0" stop-color="#8b6c68"/>
          <stop offset=".23" stop-color="#8b6c68"/>
          <stop offset=".24" stop-color="#22205c"/>
          <stop offset=".36" stop-color="#16163f"/>
          <stop offset=".4" stop-color="#3b1640"/>
          <stop offset=".6" stop-color="#3b1640"/>
          <stop offset=".62" stop-color="#0a0f18"/>
          <stop offset="1" stop-color="#0a0a14"/>
        </linearGradient>
      </defs>
      <rect width="639" height="283" fill="url(#sky)"/>
      ${this.grid(639, 283, 35.7, 'url(#wire)', rows)}
    </svg>`;
  }

  render() {
    return html`
      <div class="tabs">
        <div class="tab">${ICONS.cat}<span>Estudiantes en columnas</span></div>
        ${icon(13, 22, svg`<path d="M0 3c5 6 4 18 11 18.500h2V22H0z" fill="#fff"/><path d="M-3 .5C5 1 4 21 11 21.500h2" stroke="#8d8d8d"/>`)}
        <div class="rest">${icon(9, 9, svg`<path d="M1 1l7 7M8 1 1 8" stroke="#333" stroke-width="1.300"/>`)}</div>
      </div>
      <div class="work">
        <div class="corner"></div>
        <div class="hruler">${this.hruler()}</div>
        <div class="vscroll">
          <div class="arrow">${icon(6, 4, svg`<path d="M.2 3.800h5.600L3 .5z" fill="#666"/>`)}</div>
          <div class="vthumb"></div>
          <div class="arrow">${icon(6, 4, svg`<path d="M.2.2h5.600L3 3.500z" fill="#666"/>`)}</div>
        </div>
        <div class="vruler">${this.vruler()}</div>
        <div class="surface">
          <div class="band head">
            ${this.header()}
            <div class="lbl big" style=${place({ x: 3, y: -12.5, w: 312, h: 25 })}>Estudiantes en columnas</div>
            <div class="lbl calc" style=${place({ x: 345, y: 19.5, w: 106, h: 20 })}>=Fecha()</div>
          </div>
          <div class="bar">${ICONS.section}Detalle</div>
          <div class="band detail">
            ${this.detail()}
            ${this.labels.map(l => html`<div class="lbl" style=${place(l)}>${l.text}</div>`)}
            <div class="lbl link" style=${place({ x: 21, y: 169.5, w: 45, h: 23 })}>Curso</div>
            ${this.fields.map(f => html`<div class="fld" style=${place(f)}>${f.text}</div>`)}
            <div class="fld combo" style=${place({ x: 180, y: 170, w: 246, h: 22 })}>Curso<div>${ICONS.down}</div></div>
            <div class="lbl mid" style=${place({ x: 113, y: 240.5, w: 267, h: 17 })}>Diseñado por Duber J. Rocha B.</div>
            <div class="nav" style=${place({ x: 460.5, y: 14, w: 144, h: 72.5 })}>
              ${this.commands.map(c => html`<div class="key">${ICONS[c]}</div>`)}
            </div>
            <div class="pic" style=${place({ x: 466.500, y: 94, w: 121, h: 128 })}></div>
            ${this.handles.map(([x, y]) => html`<div class="grip" style=${styleMap({ left: `${467 + x}px`, top: `${94 + y}px` })}></div>`)}
            <div class="grip move" style=${styleMap({ left: '463px', top: '90px' })}></div>
            <div class="fld photo" style=${place({ x: 481.500, y: 233, w: 107, h: 23 })}>Foto</div>
            <div class="key exit" style=${place({ x: 599, y: 244.5, w: 36, h: 36.5 })}>${ICONS.door}</div>
          </div>
          <div class="bar foot">${ICONS.section}Pie del formulario</div>
        </div>
        <div class="hscroll">
          <div class="arrow">${icon(4, 6, svg`<path d="M3.800.2v5.600L.5 3z" fill="#555"/>`)}</div>
          <div class="hthumb"></div>
          <div class="arrow">${icon(4, 6, svg`<path d="M.2.2v5.600L3.500 3z" fill="#555"/>`)}</div>
        </div>
        <div class="grey"></div>
      </div>
    `;
  }
}

@customElement('property-sheet')
export class PropertySheet extends LitElement {
  @state() tab = 'Eventos';

  tabs = ['Formato', 'Datos', 'Eventos', 'Otras', 'Todas'];
  events = ['Al hacer clic', 'Al hacer doble clic', 'Al bajar el mouse', 'Al subir el mouse', 'Al mover el mouse'];

  static styles = css`
    :host {
      display: block;
      flex: 1;
      background: #e6e6e6;
      padding: 7px 8px 7px 7px;
      color: #333;
      font-size: 10.5px;
      white-space: nowrap;
    }
    svg { display: block; flex: none; }
    .panel { height: 500px; background: #fff; }
    .title { display: flex; height: 28px; color: #a4373a; font: 300 19.5px/36px 'Noto Sans', sans-serif; letter-spacing: -0.28px; padding-left: 6px; }
    .title span { flex: 1; }
    .title div { display: flex; align-items: center; justify-content: center; width: 13px; height: 15px; background: #e6e6e6; }
    .kind { display: flex; justify-content: space-between; box-sizing: border-box; height: 35px; padding: 3px 2px 0 3px; color: #555; letter-spacing: -0.1px; }
    .kind span { margin-right: 7px; }
    .kind svg { margin-top: 5px; }
    .select {
      display: flex;
      align-items: center;
      justify-content: space-between;
      box-sizing: border-box;
      height: 21px;
      margin: 0 0 5px 2px;
      padding-left: 3px;
      border: 1px solid #a5a5a5;
      font-size: 10.5px;
      line-height: 17px;
    }
    .select span { margin-top: -2px; }
    .select div { display: flex; align-items: center; justify-content: center; width: 15px; height: 17px; border: 1px solid #b5b5b5; background: #e6e6e6; }
    .tabs { display: flex; align-items: flex-end; height: 19px; padding-left: 2px; border-bottom: 1px solid #d0d0d0; }
    .tab { box-sizing: border-box; height: 17px; line-height: 15px; text-align: center; background: #f3f3f3; border: 1px solid #ddd; border-width: 1px 1px 0 0; overflow: hidden; width: 40.5px; }
    .tab:first-child { padding-left: 2px; text-align: left; }
    .tab.on { width: 44px; height: 20px; background: #fff; border-color: #aaa; border-left: 1px solid #aaa; margin-bottom: -1px; line-height: 16px; }
    .grid { display: grid; grid-template-columns: 116.5px 83.500px; grid-auto-rows: 13.1px; gap: 1px; margin: 5px 0 0 4px; width: 201px; padding: 1px; background: #c5c5c5; }
    .grid > div { display: flex; background: #fff; line-height: 13px; padding-left: 1px; }
    .grid .edit { align-items: center; justify-content: flex-end; position: relative; }
    .caret { width: 1px; height: 11px; background: #000; margin: 0 auto 0 1px; }
    .mini { display: flex; align-items: center; justify-content: center; box-sizing: border-box; width: 15px; height: 12px; border: 1px solid #3c8fd0; background: #d3e8f8; }
    .mouse { position: absolute; left: 66px; top: 5px; z-index: 2; }
  `;

  render() {
    return html`
      <div class="panel">
        <div class="title"><span>Hoja de propiedades</span><div>${icon(10, 10, svg`<path d="M1 1l8 8M9 1 1 9" stroke="#555" stroke-width="1.700"/>`)}</div></div>
        <div class="kind"><div><span>Tipo de selección:</span>Imagen</div>${ICONS.sort}</div>
        <div class="select"><span>Imagen</span><div>${ICONS.down}</div></div>
        <div class="tabs">
          ${this.tabs.map(t => html`<div class=${classMap({ tab: true, on: t === this.tab })} @click=${() => (this.tab = t)}>${t}</div>`)}
        </div>
        <div class="grid">
          ${this.events.map((e, i) => html`
            <div>${e}</div>
            ${i === 1
              ? html`<div class="edit">
                  <span class="caret"></span>
                  <span class="mini">${ICONS.down}</span>
                  <span class="mini">${icon(9, 2, svg`<path d="M0 1h2M3.500 1h2M7 1h2" stroke="#111" stroke-width="2"/>`)}</span>
                  <span class="mouse">${ICONS.cursor}</span>
                </div>`
              : html`<div></div>`}
          `)}
        </div>
      </div>
    `;
  }
}

@customElement('task-bar')
export class TaskBar extends LitElement {
  apps = [
    { pic: 'start' }, { pic: 'find2' }, { pic: 'taskview' }, { pic: 'edge' },
    { pic: 'explorer', open: true }, { pic: 'store' }, { pic: 'firefox' }, { pic: 'chrome' },
    { pic: 'camtasia', open: true }, { pic: 'recorder', open: true }, { pic: 'winrar', open: true },
    { pic: 'bigcat', open: true, active: true }
  ];

  static styles = css`
    :host {
      display: flex;
      height: 36px;
      background: linear-gradient(90deg, #562a08 0, #52300a 48px, #523a12 56px, #513c16 118px, #432b07 128px, #402905 640px, #4b3109 820px, #573d11 1000px, #5b4014 1275px, #4d1545 1276px);
      color: #fff;
      font-size: 11px;
    }
    svg { display: block; flex: none; }
    .app { display: flex; align-items: center; justify-content: center; box-sizing: border-box; width: 46px; border-bottom: 3px solid transparent; padding-top: 3px; }
    .app:first-child { margin-left: -1px; }
    .app.active { background: #8a6418; border-bottom-color: #f0d48c; }
    .app.open:not(.active) { background: linear-gradient(#f7e2b0, #f7e2b0) 50% 100% / 38px 3px no-repeat border-box; }
    .tray { display: flex; align-items: center; margin-left: auto; padding: 0 20px 0 0; }
    .tray span { letter-spacing: -0.5px; margin-top: -1px; }
    .clock { width: 66px; text-align: center; line-height: 17px; margin: -2px 10px 0 9px; letter-spacing: -0.4px; white-space: nowrap; }
    .p1 { margin-right: 20px; }
    .p2 { margin-right: 10px; }
    .p3 { margin-right: 9px; }
    .p4 { margin-right: 10px; }
    .p5 { margin-right: 7px; }
    .p6 { margin-right: 12px; }
  `;

  render() {
    return html`
      ${this.apps.map(a => html`
        <div class=${classMap({ app: true, open: !!a.open, active: !!a.active })}>${ICONS[a.pic]}</div>`)}
      <div class="tray">
        <div class="p1">${ICONS.people}</div>
        <div class="p2">${ICONS.up}</div>
        <div class="p3">${ICONS.dropbox}</div>
        <div class="p4">${ICONS.battery}</div>
        <div class="p5">${ICONS.wifi}</div>
        <div class="p6">${ICONS.volume}</div>
        <span>ESP</span>
        <div class="clock">5:16 p.m.<br>6/12/2017</div>
        ${ICONS.notif}
      </div>
    `;
  }
}

@customElement('app-root')
export class AppRoot extends LitElement {
  static styles = css`
    :host {
      display: flex;
      flex-direction: column;
      width: 1280px;
      height: 720px;
      overflow: hidden;
      background: #f1f1f1;
      font-family: 'Noto Sans', 'Liberation Sans', sans-serif;
      font-size: 11px;
      white-space: nowrap;
    }
    svg { display: block; flex: none; }
    .top { display: flex; height: 61px; background: #a4353a; color: #fff; letter-spacing: -0.28px; }
    .left { width: 446px; }
    .ctx { width: 203px; background: #80262c; }
    .right { flex: 1; }
    .row { display: flex; align-items: center; height: 29px; }
    .quick { width: 130px; display: flex; align-items: center; padding: 1px 0 0 20px; gap: 3.5px; box-sizing: border-box; }
    .quick svg:first-child { margin-right: 9px; }
    .quick svg:nth-child(3) { margin-right: 5px; }
    .quick svg:last-child { margin-left: 8px; }
    .app-title { width: 316px; text-align: center; }
    .ctx .row { justify-content: center; color: #dfa9ab; letter-spacing: -0.4px; }
    .tabs { display: flex; height: 28px; line-height: 28px; margin-top: 4px; text-align: center; letter-spacing: -0.34px; }
    .t0 { width: 55px; letter-spacing: 0; }
    .t1 { width: 56px; letter-spacing: 0; }
    .t2 { width: 52px; letter-spacing: -0.2px; }
    .t3 { width: 101px; }
    .t4 { width: 178px; }
    .ctx .tabs { -webkit-text-stroke: 0.3px; letter-spacing: -0.3px; }
    .t5 { width: 59px; background: #f1f1f1; color: #a4353a; }
    .t6 { width: 76px; }
    .t7 { width: 68px; }
    .user { margin-left: 332px; width: 122px; }
    .help { width: 30px; text-align: center; font-size: 12px; -webkit-text-stroke: 0.4px; margin-left: 12px; }
    .mark { margin: -15px 13px 0 0; }
    .win { display: flex; width: 176px; }
    .win svg { margin-right: 32.5px; }
    .tell { display: flex; align-items: center; gap: 5px; height: 28px; margin-top: 3px; padding-left: 14px; color: #edc9ca; }
    .work { display: flex; height: 514px; background: #f1f1f1; }
    form-designer { margin: 0 0 0 4px; }
    .status { display: flex; align-items: center; box-sizing: border-box; height: 22px; border-top: 1px solid #c8c8c8; padding-left: 8px; color: #444; font-size: 10.5px; letter-spacing: -0.06px; }
    .status .views { display: flex; align-items: stretch; margin-left: auto; height: 100%; }
    .status .views div { display: flex; align-items: center; justify-content: center; width: 35.5px; padding-bottom: 1px; }
    .status .views div:last-child { background: #c9c9c9; }
  `;

  render() {
    return html`
      <div class="top">
        <div class="left">
          <div class="row">
            <div class="quick">${ICONS.save}${ICONS.undo}${caret('#fff')}${ICONS.redo}${caret('#b95a5e')}${ICONS.customize}</div>
            <div class="app-title">Sistema Control de Estudiantes</div>
          </div>
          <div class="tabs">
            ${['Archivo', 'Inicio', 'Crear', 'Datos externos', 'Herramientas de base de datos'].map((t, i) => html`<div class="t${i}">${t}</div>`)}
          </div>
        </div>
        <div class="ctx">
          <div class="row">Herramientas de diseño de formulario</div>
          <div class="tabs"><div class="t5">Diseño</div><div class="t6">Organizar</div><div class="t7">Formato</div></div>
        </div>
        <div class="right">
          <div class="row">
            <div class="user">Duber Jair Rocha Botero</div>
            <div class="help">?</div>
            <div class="mark">${ICONS.resize}</div>
            <div class="win">${ICONS.min}${ICONS.restore}${ICONS.close}</div>
          </div>
          <div class="tell">${ICONS.bulb}¿Qué desea hacer?</div>
        </div>
      </div>
      <ribbon-bar></ribbon-bar>
      <div class="work">
        <nav-pane></nav-pane>
        <form-designer></form-designer>
        <property-sheet></property-sheet>
      </div>
      <div class="status">
        Macro o función que se ejecuta cuando se hace doble clic sobre el control
        <div class="views"><div>${ICONS.formview}</div><div>${ICONS.layout}</div><div>${ICONS.designview}</div></div>
      </div>
      <task-bar></task-bar>
    `;
  }
}
